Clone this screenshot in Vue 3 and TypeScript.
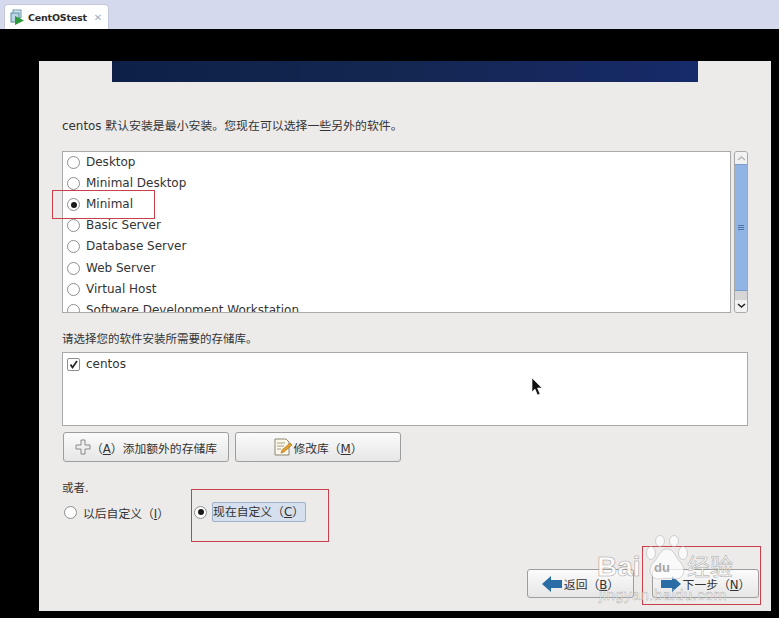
<script setup lang="ts">
const groups: { name: string; checked: boolean }[] = [
  { name: 'Desktop', checked: false },
  { name: 'Minimal Desktop', checked: false },
  { name: 'Minimal', checked: true },
  { name: 'Basic Server', checked: false },
  { name: 'Database Server', checked: false },
  { name: 'Web Server', checked: false },
  { name: 'Virtual Host', checked: false },
  { name: 'Software Development Workstation', checked: false },
]
</script>

<template>
  <div class="screen">
    <header class="tabbar">
      <div class="tab">
        <svg class="tab-icon" width="14" height="16" viewBox="0 0 14 16">
          <rect x="3" y="1" width="8" height="8" fill="#d5e6ef" stroke="#6d97ab" />
          <rect x="1" y="4" width="8" height="9" fill="#b9d6e4" stroke="#5d8ba1" />
          <path d="M5 7 L14 11.5 L5 16 Z" fill="#2f9a3a" />
        </svg>
        <span class="tab-name">CentOStest</span>
        <span class="tab-close">✕</span>
      </div>
    </header>

    <main class="stage">
      <section class="panel">
        <div class="banner"></div>
        <div class="content">
          <p class="intro">centos 默认安装是最小安装。您现在可以选择一些另外的软件。</p>

          <div class="list-row">
            <div class="listbox">
              <div v-for="g in groups" :key="g.name" class="item">
                <span class="radio" :class="{ on: g.checked }"></span>
                <span class="item-name">{{ g.name }}</span>
              </div>
            </div>
            <div class="scrollbar">
              <div class="sb-btn">
                <svg width="9" height="6" viewBox="0 0 9 6"><path d="M1 5 L4.500 2 L8 5" fill="none" stroke="#b5b5b5" stroke-width="1.500" /></svg>
              </div>
              <div class="sb-thumb">
                <span class="grip"></span><span class="grip"></span><span class="grip"></span>
              </div>
              <div class="sb-track"></div>
              <div class="sb-btn">
                <svg width="9" height="6" viewBox="0 0 9 6"><path d="M1 1 L4.500 4 L8 1" fill="none" stroke="#222" stroke-width="1.500" /></svg>
              </div>
            </div>
          </div>

          <p class="repo-label">请选择您的软件安装所需要的存储库。</p>

          <div class="repo-box">
            <div class="repo-item">
              <span class="check">
                <svg width="9" height="9" viewBox="0 0 9 9"><path d="M1.500 4.500 L3.500 7.500 L8 1" fill="none" stroke="#222" stroke-width="1.700" /></svg>
              </span>
              <span>centos</span>
            </div>
          </div>

          <div class="repo-actions">
            <button class="btn repo-btn" type="button">
              <svg width="16" height="16" viewBox="0 0 16 16">
                <path d="M6 1 H10 V6 H15 V10 H10 V15 H6 V10 H1 V6 H6 Z" fill="#eeeeee" stroke="#8a8a8a" />
              </svg>
              <span class="add-label">（<u>A</u>）添加额外的存储库</span>
            </button>
            <button class="btn repo-btn" type="button">
              <svg width="20" height="20" viewBox="0 0 20 20">
                <path d="M2 2 H13 L16 5 V18 H2 Z" fill="#fbf8ea" stroke="#8b8775" />
                <path d="M4 6 H12 M4 9 H11 M4 12 H8" stroke="#a5a08c" />
                <path d="M8 16 L9 13 L17 6 L19 8 L11 15 Z" fill="#e3a02c" stroke="#9c6a14" stroke-width=".6" />
              </svg>
              <span>修改库（<u>M</u>）</span>
            </button>
          </div>

          <p class="or">或者.</p>

          <div class="options">
            <label class="option">
              <span class="radio"></span>
              <span>以后自定义（<u>I</u>）</span>
            </label>
            <label class="option option-now">
              <span class="radio on"></span>
              <span class="focused">现在自定义（<u>C</u>）</span>
            </label>
          </div>

          <div class="footer">
            <button class="btn nav-btn" type="button">
              <svg width="20" height="18" viewBox="0 0 20 18"><path d="M0 9 L9 1 V5 H20 V13 H9 V17 Z" fill="#2a6ca6" /></svg>
              <span>返回（<u>B</u>）</span>
            </button>
            <button class="btn nav-btn" type="button">
              <svg width="20" height="18" viewBox="0 0 20 18"><path d="M20 9 L11 1 V5 H0 V13 H11 V17 Z" fill="#2a6ca6" /></svg>
              <span>下一步（<u>N</u>）</span>
            </button>
          </div>
        </div>

        <svg class="cursor" width="12" height="18" viewBox="0 0 12 18">
          <path d="M1 0 V14 L4 11 L6.500 17 L9 16 L6.500 10 H11 Z" fill="#111" stroke="#fff" stroke-width=".6" />
        </svg>

        <div class="mark mark-minimal"></div>
        <div class="mark mark-now"></div>
        <div class="mark mark-next"></div>

        <div class="watermark">
          <svg class="paw" width="44" height="46" viewBox="0 0 44 46">
            <g fill="#ffffff" fill-opacity=".7" stroke="#9a9a9a" stroke-opacity=".4">
              <ellipse cx="6" cy="18" rx="4.500" ry="6.500" />
              <ellipse cx="15" cy="6" rx="4.500" ry="5.500" />
              <ellipse cx="29" cy="6" rx="4.500" ry="5.500" />
              <ellipse cx="38" cy="18" rx="4.500" ry="6.500" />
              <path d="M22 14 C15 14 14 22 8 28 C2 35 6 45 15 44 C19 43 25 43 29 44 C38 45 42 35 36 28 C30 22 29 14 22 14 Z" />
            </g>
          </svg>
          <span class="wm-bai">Bai</span>
          <span class="wm-du">du</span>
          <span class="wm-jy">经验</span>
          <span class="wm-url">jingyan.baidu.com</span>
        </div>
      </section>
    </main>
  </div>
</template>

<style>
html, body { margin: 0; background: #000; }
</style>

<style scoped>
.screen {
  width: 779px;
  height: 618px;
  overflow: hidden;
  display: flex;
  flex-direction: column;
  background: #000;
  font-family: "DejaVu Sans", "Noto Sans CJK SC", sans-serif;
  color: #333;
}
.tabbar {
  height: 29px;
  flex: none;
  background: #d5d9ee;
  padding: 4px 0 0 4px;
  box-sizing: border-box;
  display: flex;
}
.tab {
  width: 105px;
  height: 25px;
  box-sizing: border-box;
  background: #fff;
  border-radius: 4px 4px 0 0;
  border: 1px solid #c4c8da;
  border-bottom: 0;
  display: flex;
  align-items: center;
  padding: 0 0 0 5px;
  gap: 4px;
}
.tab-name {
  font-family: "DejaVu Sans", sans-serif;
  font-size: 9.500px;
  font-weight: 700;
  letter-spacing: -0.200px;
  color: #2b2b2b;
  white-space: nowrap;
}
.tab-close {
  font-size: 10px;
  color: #9fb0c0;
  margin-left: 3px;
  font-weight: 700;
}
.stage {
  flex: 1;
  padding: 32px 8px 7px 39px;
  min-height: 0;
  display: flex;
}
.panel {
  position: relative;
  flex: 1;
  background: #ecebe9;
  display: flex;
  flex-direction: column;
}
.banner {
  height: 21px;
  flex: none;
  margin: 0 73px;
  background: linear-gradient(90deg, #0d2048 0%, #12274f 45%, #172a6a 100%);
}
.content {
  flex: 1;
  padding: 0 23px;
  display: flex;
  flex-direction: column;
  font-size: 12px;
}
.intro {
  margin: 36px 0 0;
  height: 17px;
  line-height: 17px;
  font-size: 11.900px;
  white-space: nowrap;
}
.list-row {
  margin-top: 16px;
  height: 162px;
  display: flex;
  gap: 3px;
}
.listbox {
  flex: 1;
  overflow: hidden;
  background: #fff;
  border: 1px solid #a9a9a9;
}
.item {
  height: 21.100px;
  display: flex;
  align-items: center;
  gap: 6px;
  padding-left: 4px;
  white-space: nowrap;
}
.item-name {
  position: relative;
  top: -0.500px;
}
.radio {
  width: 11px;
  height: 11px;
  flex: none;
  border: 1px solid #8e8e8e;
  border-radius: 50%;
  background: #fff;
  display: inline-flex;
  align-items: center;
  justify-content: center;
}
.radio.on::after {
  content: "";
  width: 6px;
  height: 6px;
  border-radius: 50%;
  background: #1a1a1a;
}
.scrollbar {
  width: 14px;
  flex: none;
  display: flex;
  flex-direction: column;
  border: 1px solid #a8a8a8;
  border-radius: 3px;
  box-sizing: border-box;
  overflow: hidden;
  background: #d6d6d6;
}
.sb-btn {
  height: 12px;
  flex: none;
  background: #f2f2f2;
  display: flex;
  align-items: center;
  justify-content: center;
}
.sb-thumb {
  height: 127px;
  flex: none;
  background: #90b5e4;
  border: 1px solid #7b9ccb;
  border-width: 1px 0;
  box-sizing: border-box;
  display: flex;
  flex-direction: column;
  align-items: center;
  justify-content: center;
  gap: 1px;
}
.grip {
  width: 6px;
  height: 1px;
  background: #4e74a8;
}
.sb-track {
  flex: 1;
}
.repo-label {
  margin: 18px 0 0;
  height: 17px;
  line-height: 17px;
  font-size: 11.500px;
  white-space: nowrap;
}
.repo-box {
  margin-top: 4px;
  height: 74px;
  box-sizing: border-box;
  background: #fff;
  border: 1px solid #a9a9a9;
  padding: 2px 4px;
}
.repo-item {
  display: flex;
  align-items: center;
  gap: 6px;
  height: 18px;
}
.check {
  width: 11px;
  height: 11px;
  border: 1px solid #8e8e8e;
  border-radius: 2px;
  background: #fff;
  display: inline-flex;
  align-items: center;
  justify-content: center;
}
.repo-actions {
  margin: 6px 0 0 1px;
  display: flex;
  gap: 6px;
}
.btn {
  box-sizing: border-box;
  border: 1px solid #9d9d9d;
  border-radius: 3px;
  background: linear-gradient(#fbfbfb, #e6e6e6);
  display: flex;
  align-items: center;
  justify-content: center;
  font: inherit;
  font-size: 11.800px;
  color: #333;
  padding: 0;
}
.repo-btn {
  width: 166px;
  height: 30px;
}
.add-label {
  font-size: 11.800px;
  white-space: nowrap;
}
.or {
  margin: 18px 0 0;
  height: 17px;
  line-height: 17px;
  font-size: 11.500px;
}
.options {
  margin-top: 3px;
  height: 24px;
  display: flex;
  align-items: center;
  font-size: 11.800px;
}
.option {
  display: flex;
  align-items: center;
  white-space: nowrap;
  gap: 6px;
  margin-left: 2px;
}
.option-now {
  margin-left: 25px;
  gap: 5px;
}
.focused {
  background: #d5dfee;
  border: 1px solid #9db0cc;
  border-radius: 2px;
  height: 20px;
  line-height: 19px;
  box-sizing: border-box;
  padding-right: 1px;
}
.footer {
  margin-top: 45px;
  display: flex;
  justify-content: flex-end;
  gap: 18px;
  margin-right: -11px;
}
.nav-btn {
  width: 107px;
  height: 29px;
  gap: 2px;
}
u {
  text-underline-offset: 1px;
}
.cursor {
  position: absolute;
  left: 492px;
  top: 317px;
}
.mark {
  position: absolute;
  box-sizing: border-box;
  border: 1px solid #c9404a;
}
.mark-minimal {
  left: 13px;
  top: 129px;
  width: 103px;
  height: 29px;
}
.mark-now {
  left: 152px;
  top: 428px;
  width: 138px;
  height: 53px;
}
.mark-next {
  left: 603px;
  top: 485px;
  width: 119px;
  height: 59px;
}
.watermark {
  position: absolute;
  left: 557px;
  top: 470px;
  width: 170px;
  height: 85px;
  pointer-events: none;
}
.paw {
  position: absolute;
  left: 49px;
  top: 4px;
}
.wm-bai {
  position: absolute;
  left: 1px;
  top: 20px;
  font: 700 28px "Liberation Sans", sans-serif;
  color: rgba(255, 255, 255, 0.85);
  -webkit-text-stroke: 0.6px rgba(120, 120, 120, 0.7);
}
.wm-du {
  position: absolute;
  left: 58px;
  top: 29px;
  font: 700 13px "Liberation Sans", sans-serif;
  color: rgba(120, 120, 120, 0.65);
}
.wm-jy {
  position: absolute;
  left: 91px;
  top: 21px;
  font: 400 23px "Noto Sans CJK SC", sans-serif;
  line-height: 26px;
  color: rgba(255, 255, 255, 0.85);
  -webkit-text-stroke: 0.5px rgba(120, 120, 120, 0.7);
}
.wm-url {
  position: absolute;
  left: 3px;
  top: 55px;
  font: 400 15px "Liberation Sans", sans-serif;
  color: rgba(255, 255, 255, 0.6);
  -webkit-text-stroke: 0.4px rgba(120, 120, 120, 0.6);
  letter-spacing: 0.400px;
  white-space: nowrap;
}
</style>
